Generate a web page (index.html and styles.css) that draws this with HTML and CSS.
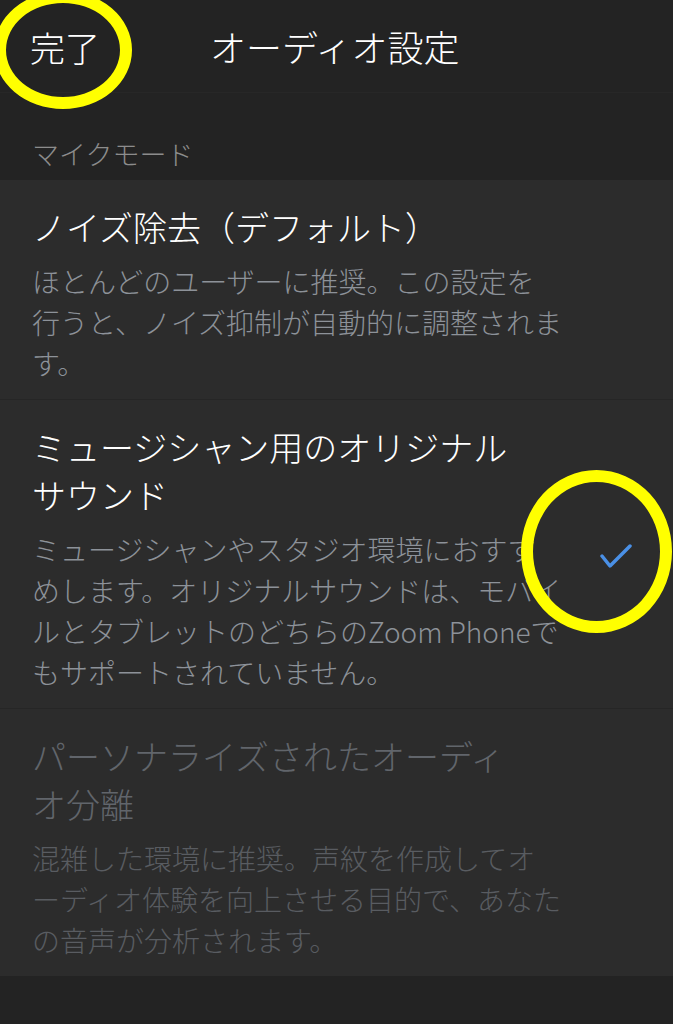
FILE: index.html
```html
<!DOCTYPE html>
<html lang="ja">
<head>
  <meta charset="UTF-8" />
  <meta name="viewport" content="width=device-width, initial-scale=1.0"/>
  <title>オーディオ設定</title>
  <link rel="stylesheet" href="styles.css">
</head>
<body>
  <header class="nav-bar">
    <span class="done">完了</span>
    <h1>オーディオ設定</h1>
  </header>

  <div class="section-label">マイクモード</div>

  <div class="options">
    <div class="option">
      <div class="option-text">
        <div class="option-title">ノイズ除去（デフォルト）</div>
        <div class="option-desc">ほとんどのユーザーに推奨。この設定を<br>行うと、ノイズ抑制が自動的に調整されま<br>す。</div>
      </div>
    </div>

    <div class="option">
      <div class="option-text">
        <div class="option-title">ミュージシャン用のオリジナル<br>サウンド</div>
        <div class="option-desc">ミュージシャンやスタジオ環境におすす<br>めします。オリジナルサウンドは、モバイ<br>ルとタブレットのどちらのZoom Phoneで<br>もサポートされていません。</div>
      </div>
      <svg class="check" width="34" height="28" viewBox="0 0 34 28">
        <polyline points="3,12 11,22 31,2" fill="none" stroke="#4a90e6" stroke-width="3.5" stroke-linecap="round" stroke-linejoin="round"/>
      </svg>
    </div>

    <div class="option disabled">
      <div class="option-text">
        <div class="option-title">パーソナライズされたオーディ<br>オ分離</div>
        <div class="option-desc">混雑した環境に推奨。声紋を作成してオ<br>ーディオ体験を向上させる目的で、あなた<br>の音声が分析されます。</div>
      </div>
    </div>
  </div>

  <!-- annotation circles drawn on top of the screenshot -->
  <div class="mark mark-done"></div>
  <div class="mark mark-check"></div>
</body>
</html>
```

FILE: styles.css
```css
body {
  margin: 0;
  padding: 0;
  font-family: "Noto Sans CJK JP", "Noto Sans", sans-serif;
  font-weight: 300;
  background-color: #232323;
  color: #ffffff;
  min-height: 100vh;
  position: relative;
  overflow: hidden;
}

.nav-bar {
  display: flex;
  align-items: center;
  height: 93px;
  padding: 0 30px;
  border-bottom: 1px solid #272727;
  box-sizing: border-box;
}

.done {
  font-size: 35px;
  line-height: 1;
  width: 180px;
}

.nav-bar h1 {
  margin: 0;
  font-size: 36px;
  font-weight: 300;
  line-height: 1;
}

.section-label {
  padding: 44px 32px 10px;
  font-size: 27px;
  line-height: 33px;
  color: #8c8c8c;
}

.options {
  background-color: #2c2c2c;
}

.option {
  display: flex;
  align-items: center;
  padding: 23px 40px 15px 32px;
  border-bottom: 1px solid #262626;
}

.option:last-child {
  border-bottom: none;
}

.option-text {
  flex: 1;
}

.option-title {
  font-size: 34px;
  line-height: 48px;
}

.option-desc {
  margin-top: 10px;
  font-size: 28px;
  line-height: 41px;
  color: #8d9299;
}

.disabled .option-title {
  color: #61656b;
}

.disabled .option-desc {
  color: #595c61;
}

.check {
  display: block;
}

.mark {
  position: absolute;
  border: 12px solid #ffff00;
  border-radius: 50%;
  box-sizing: border-box;
}

.mark-done {
  left: -6px;
  top: -9px;
  width: 138px;
  height: 118px;
}

.mark-check {
  left: 521px;
  top: 470px;
  width: 151px;
  height: 163px;
}
```
